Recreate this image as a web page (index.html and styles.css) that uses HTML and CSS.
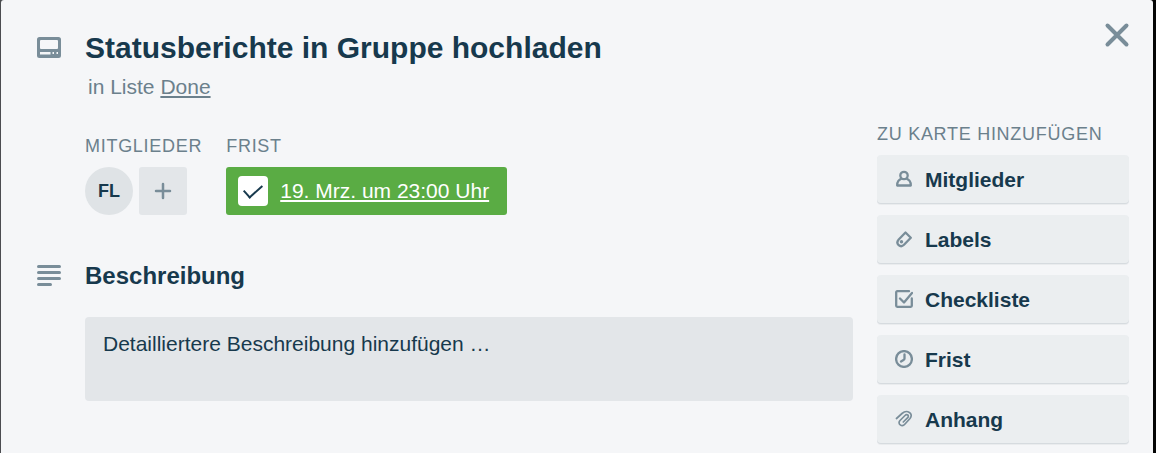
FILE: index.html
```
<!DOCTYPE html>
<html lang="de">
<head>
<meta charset="utf-8">
<meta name="viewport" content="width=device-width, initial-scale=1">
<title>Statusberichte in Gruppe hochladen</title>
<link rel="stylesheet" href="styles.css">
</head>
<body>
<div class="overlay">
  <div class="dialog" role="dialog" aria-labelledby="card-title">
    <header class="card-header">
      <svg class="section-icon" viewBox="0 0 26 26" aria-hidden="true">
        <path fill="currentColor" fill-rule="evenodd" d="M3.500 3h19a2.500 2.500 0 0 1 2.500 2.500v16a2.500 2.500 0 0 1-2.500 2.500h-19a2.500 2.500 0 0 1-2.500-2.500v-16a2.500 2.500 0 0 1 2.500-2.500zM5 6q-1 0-1 1v7q0 1 1 1h16q1 0 1-1v-7q0-1-1-1zM4 18v2.500h10.500v-2.500zM16.500 18v2h1.500v-2zM20.500 18v2h1.500v-2z"/>
      </svg>
      <div class="card-heading">
        <h1 id="card-title" class="card-title">Statusberichte in Gruppe hochladen</h1>
        <p class="card-list">in Liste <a class="list-link" href="#liste">Done</a></p>
      </div>
      <button class="close" type="button" aria-label="Schließen">
        <svg viewBox="0 0 26 26" aria-hidden="true"><path d="M3.500 3.500l19 19M22.500 3.500l-19 19"/></svg>
      </button>
    </header>
    <div class="columns">
      <main class="main">
        <div class="details">
          <section>
            <h2 class="label">Mitglieder</h2>
            <div class="members">
              <button class="avatar" type="button">FL</button>
              <button class="add-member" type="button" aria-label="Mitglied hinzufügen">
                <svg viewBox="0 0 18 18" aria-hidden="true"><path d="M9 2v14M2 9h14"/></svg>
              </button>
            </div>
          </section>
          <section>
            <h2 class="label">Frist</h2>
            <div class="due">
              <input class="due-check" type="checkbox" aria-labelledby="due-date" checked>
              <a class="due-date" id="due-date" href="#frist">19. Mrz. um 23:00 Uhr</a>
            </div>
          </section>
        </div>
        <section class="description">
          <svg class="section-icon" viewBox="0 0 26 26" aria-hidden="true">
            <path class="lines" d="M2.500 5.500h21M2.500 11.500h21M2.500 17.500h21M2.500 23.500h12"/>
          </svg>
          <div class="description-body">
            <h2 class="description-title">Beschreibung</h2>
            <a class="description-box" href="#beschreibung">Detailliertere Beschreibung hinzufügen …</a>
          </div>
        </section>
      </main>
      <aside class="sidebar">
        <h2 class="label">Zu Karte hinzufügen</h2>
        <button class="action" type="button">
          <svg class="action-icon" viewBox="0 0 18 18" aria-hidden="true"><circle cx="9" cy="5.500" r="3.700"/><path d="M6.500 8.500C4 10 2.200 11 2.200 15.500h13.600c0-4.500-1.800-5.500-4.300-7"/></svg>
          Mitglieder
        </button>
        <button class="action" type="button">
          <svg class="action-icon" viewBox="0 0 18 18" aria-hidden="true"><path d="M10.500 2.500l5.300 5.300-6.800 7c-3.500 3.500-9-1-5.300-5.300z"/><circle class="solid" cx="6.500" cy="11.700" r="1.700"/></svg>
          Labels
        </button>
        <button class="action" type="button">
          <svg class="action-icon" viewBox="0 0 18 18" aria-hidden="true"><path d="M14 1.200H2.200a1 1 0 0 0-1 1v13.600a1 1 0 0 0 1 1h13.600a1 1 0 0 0 1-1V8.500M5 8.500l4 4L17 3"/></svg>
          Checkliste
        </button>
        <button class="action" type="button">
          <svg class="action-icon" viewBox="0 0 18 18" aria-hidden="true"><circle cx="9" cy="9" r="7.900"/><path d="M9.500 4.500V8.500q0 1-1 1.500L6 11.500"/></svg>
          Frist
        </button>
        <button class="action" type="button">
          <svg class="action-icon thin" viewBox="0 0 18 18" aria-hidden="true"><path d="M1.500 8.500L7 3.500c5-4.500 12 0 8 5l-5 5.500c-3 3.500-8 0-5-3.500l5-5c2-2 4.500 0 2.700 2.200L8.300 12"/></svg>
          Anhang
        </button>
      </aside>
    </div>
  </div>
</div>
</body>
</html>
```
FILE: styles.css
```
* {
  box-sizing: border-box;
}

body {
  margin: 0;
  background: #050505;
  color: #17394d;
  font-family: "Liberation Sans", Arial, sans-serif;
  font-size: 21px;
  line-height: 30px;
}

h1,
h2,
p {
  margin: 0;
}

a {
  color: inherit;
}

button {
  border: 0;
  padding: 0;
  color: inherit;
  font: inherit;
  cursor: pointer;
}

svg {
  display: block;
  fill: none;
  stroke-linecap: round;
  stroke-linejoin: round;
}

.overlay {
  min-height: 100vh;
  display: flex;
  padding: 0 3px 0 1px;
  background: linear-gradient(90deg, #4b4c50 50%, #050505 50%);
}

.dialog {
  flex: 1;
  min-width: 0;
  padding-bottom: 8px;
  border-radius: 3px 3px 0 0;
  background: #f5f6f8;
}

.card-header {
  display: flex;
  align-items: flex-start;
  padding: 30px 23px 0 35px;
}

.section-icon {
  flex: none;
  width: 26px;
  height: 26px;
  margin: 4px 23px 0 0;
  color: #798d99;
}

.lines {
  stroke: currentColor;
  stroke-width: 3;
}

.card-heading {
  flex: 1;
}

.card-title {
  font-size: 30px;
  line-height: 36px;
}

.card-list {
  padding: 6px 0 0 3px;
  color: #6b808c;
}

.list-link,
.due-date {
  text-decoration-thickness: 2px;
  text-underline-offset: 2px;
}

.close {
  width: 26px;
  height: 26px;
  margin-top: -8px;
  background: none;
}

.close svg {
  stroke: #798d99;
  stroke-width: 4;
}

.columns {
  display: flex;
  gap: 24px;
  padding: 17px 24px 0 35px;
}

.main {
  flex: 1;
  min-width: 0;
  padding-top: 12px;
}

.details {
  display: flex;
  gap: 24px;
  padding-left: 49px;
}

.label {
  margin-bottom: 6px;
  color: #6b808c;
  font-size: 18px;
  font-weight: 400;
  line-height: 30px;
  letter-spacing: 0.04em;
  text-transform: uppercase;
}

.members {
  display: flex;
  gap: 6px;
}

.avatar,
.add-member {
  width: 48px;
  height: 48px;
  background: #dfe3e6;
}

.avatar {
  border-radius: 50%;
  font-size: 18px;
  font-weight: 700;
}

.add-member {
  display: grid;
  place-items: center;
  border-radius: 3px;
  background: #e3e6e9;
}

.add-member svg {
  width: 18px;
  height: 18px;
  stroke: #798d99;
  stroke-width: 2.5;
}

.due {
  display: flex;
  align-items: center;
  gap: 12px;
  height: 48px;
  padding: 0 18px 0 12px;
  border-radius: 3px;
  background: #5aac44;
  color: #fff;
}

.due-check {
  display: grid;
  place-items: center;
  width: 30px;
  height: 30px;
  margin: 0;
  border-radius: 4px;
  background: #fff;
  appearance: none;
}

.due-check:checked::before {
  content: "";
  width: 16px;
  height: 8px;
  margin-bottom: 4px;
  border: solid #17394d;
  border-width: 0 0 2px 2px;
  transform: rotate(-42deg);
}

.description {
  display: flex;
  padding-top: 42px;
}

.description-body {
  flex: 1;
}

.description-title {
  padding-top: 4px;
  font-size: 24px;
  line-height: 30px;
}

.description-box {
  display: block;
  min-height: 84px;
  margin-top: 26px;
  padding: 12px 18px;
  border-radius: 4px;
  background: #e3e6e9;
  text-decoration: none;
}

.sidebar {
  flex: none;
  width: 252px;
}

.action {
  display: flex;
  align-items: center;
  gap: 12px;
  width: 100%;
  height: 48px;
  margin-bottom: 12px;
  padding: 2px 18px 0;
  border-radius: 4px;
  background: #ebeef0;
  box-shadow: 0 1px 0 #d6dbdf, 0 2px 0 #eaecee;
  font-weight: 700;
  text-align: left;
}

.action-icon {
  width: 18px;
  height: 18px;
  margin-bottom: 2px;
  stroke: #798d99;
  stroke-width: 2.3;
}

.action-icon.thin {
  stroke-width: 1.7;
}

.action-icon .solid {
  fill: #798d99;
  stroke: none;
}
```
